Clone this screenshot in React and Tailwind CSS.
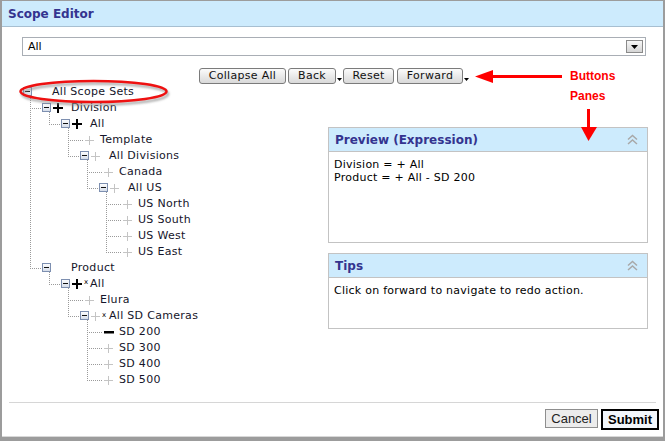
import React from "react";

const rows = [
  { L: 0, t: "All Scope Sets", box: true, icon: null },
  { L: 1, t: "Division", box: true, icon: "pb" },
  { L: 2, t: "All", box: true, icon: "pb" },
  { L: 3, t: "Template", box: false, icon: "pg" },
  { L: 3, t: "All Divisions", box: true, icon: "pg" },
  { L: 4, t: "Canada", box: false, icon: "pg" },
  { L: 4, t: "All US", box: true, icon: "pg" },
  { L: 5, t: "US North", box: false, icon: "pg" },
  { L: 5, t: "US South", box: false, icon: "pg" },
  { L: 5, t: "US West", box: false, icon: "pg" },
  { L: 5, t: "US East", box: false, icon: "pg" },
  { L: 1, t: "Product", box: true, icon: null },
  { L: 2, t: "All", box: true, icon: "pb", x: true },
  { L: 3, t: "Elura", box: false, icon: "pg" },
  { L: 3, t: "All SD Cameras", box: true, icon: "pg", x: true },
  { L: 4, t: "SD 200", box: false, icon: "mb" },
  { L: 4, t: "SD 300", box: false, icon: "pg" },
  { L: 4, t: "SD 400", box: false, icon: "pg" },
  { L: 4, t: "SD 500", box: false, icon: "pg" },
];

function cont(i, k) {
  for (let j = i + 1; j < rows.length; j++) {
    if (rows[j].L <= k) return false;
    if (rows[j].L === k + 1) return true;
  }
  return false;
}

const DOT = { stroke: "#9a9a9a", strokeWidth: 1, strokeDasharray: "1 1", shapeRendering: "crispEdges" };

function Icon({ kind }) {
  if (kind === "pb")
    return (
      <svg width="10" height="10" className="shrink-0">
        <rect x="0" y="4" width="10" height="2" fill="#000" />
        <rect x="4" y="0" width="2" height="10" fill="#000" />
      </svg>
    );
  if (kind === "pg")
    return (
      <svg width="9" height="9" className="shrink-0">
        <rect x="0" y="4" width="9" height="1" fill="#c4c4c4" />
        <rect x="4" y="0" width="1" height="9" fill="#c4c4c4" />
      </svg>
    );
  if (kind === "mb")
    return (
      <svg width="10" height="3" className="shrink-0">
        <rect x="0" y="0" width="10" height="2.5" fill="#000" />
      </svg>
    );
  return <span className="w-[10px]" />;
}

function TreeRow({ row, i }) {
  const { L, box } = row;
  const x0 = 7 + 19 * L;
  const w = box ? x0 + 9 : x0 + 5;
  const lines = [];
  for (let k = 0; k < L - 1; k++) {
    if (cont(i, k)) {
      const x = 14.5 + 19 * k;
      lines.push(<line key={"v" + k} x1={x} y1="0" x2={x} y2="16" {...DOT} />);
    }
  }
  if (L > 0) {
    const x = 14.5 + 19 * (L - 1);
    lines.push(<line key="p" x1={x} y1="0" x2={x} y2={cont(i, L - 1) ? 16 : 9} {...DOT} />);
    lines.push(<line key="h" x1={x + 1} y1="8.5" x2={box ? x0 : x0 + 3} y2="8.5" {...DOT} />);
  }
  if (box) {
    lines.push(
      <g key="b">
        <defs>
          <linearGradient id={"bg" + i} x1="0" y1="0" x2="0" y2="1">
            <stop offset="0" stopColor="#ffffff" />
            <stop offset="1" stopColor="#d3dbe8" />
          </linearGradient>
        </defs>
        <rect x={x0 + 0.5} y="3.5" width="8" height="8" fill={`url(#bg${i})`} stroke="#7d8fb0" shapeRendering="crispEdges" />
        <rect x={x0 + 2} y="7" width="5" height="1" fill="#111" />
        <line x1={x0 + 7.5} y1="12" x2={x0 + 7.5} y2="16" {...DOT} />
      </g>
    );
  }
  return (
    <div className="flex h-4 items-center">
      <svg width={w} height="16" className="shrink-0">
        {lines}
      </svg>
      {box ? (
        <div className="ml-[2px] flex w-[18px] shrink-0 items-center">
          <Icon kind={row.icon} />
          {row.x && <span className="ml-[2px] self-start text-[7px] leading-[7px] text-black">x</span>}
        </div>
      ) : (
        <div className="flex w-[15px] shrink-0 items-center">
          <Icon kind={row.icon} />
        </div>
      )}
      <span className="whitespace-nowrap text-[11px] leading-4 tracking-[0.3px] text-[#15152a]">{row.t}</span>
    </div>
  );
}

function Btn({ w, children }) {
  return (
    <div
      className={`flex h-4 items-center justify-center rounded-[3px] border border-[#7b7b7b] bg-gradient-to-b from-[#fbfbfb] to-[#d9d9d9] text-[11px] tracking-[0.3px] text-[#111] ${w}`}
    >
      {children}
    </div>
  );
}

function SplitArrow() {
  return (
    <svg width="5" height="3" className="ml-px mt-[10px] shrink-0 self-start">
      <polygon points="0,0 5,0 2.5,3" fill="#000" />
    </svg>
  );
}

function Chevrons() {
  return (
    <svg width="11" height="11" className="shrink-0">
      <polyline points="1,5.5 5.5,1.5 10,5.5" fill="none" stroke="#a8a8a8" strokeWidth="1.5" />
      <polyline points="1,10 5.5,6 10,10" fill="none" stroke="#a8a8a8" strokeWidth="1.5" />
    </svg>
  );
}

function Pane({ title, h, children }) {
  return (
    <div className={`flex flex-col border border-[#c3c3c3] bg-white ${h}`}>
      <div className="flex h-[24px] shrink-0 items-center justify-between border-b border-[#c3c3c3] bg-[#cdebfd] pl-[6px] pr-[9px]">
        <span className="text-[12px] font-bold leading-none text-[#34348f]">{title}</span>
        <Chevrons />
      </div>
      <div className="pl-[5px] pt-[6px] text-[11px] leading-[13px] tracking-[0.25px] text-black">{children}</div>
    </div>
  );
}

export default function App() {
  return (
    <div className="relative h-[441px] w-[668px] overflow-hidden bg-white font-['DejaVu_Sans',sans-serif]">
      <div className="flex h-[441px] w-[665px] flex-col border-b-4 border-l-2 border-r-2 border-t border-[#9c9c9c]">
        <div className="flex h-[26px] shrink-0 items-center border-b border-[#a7bfd1] bg-[#cdebfd] pl-[6px]">
          <span className="text-[12px] font-bold leading-none text-[#34348f]">Scope Editor</span>
        </div>

        <div className="ml-[20px] mr-[17px] mt-[10px] flex h-[19px] shrink-0 items-center justify-between border border-[#a9aeb5] bg-white pl-[5px] pr-[2px]">
          <span className="text-[11px] leading-none text-black">All</span>
          <div className="flex h-[13px] w-[17px] items-center justify-center border border-[#8a8a8a] bg-gradient-to-b from-[#f7f7f7] to-[#d5d5d5]">
            <svg width="7" height="4">
              <polygon points="0,0 7,0 3.5,4" fill="#000" />
            </svg>
          </div>
        </div>

        <div className="mt-[12px] flex h-4 shrink-0 items-center pl-[197px]">
          <Btn w="w-[87px]">Collapse All</Btn>
          <div className="ml-[2px]">
            <Btn w="w-[48px]">Back</Btn>
          </div>
          <SplitArrow />
          <div className="ml-px">
            <Btn w="w-[51px]">Reset</Btn>
          </div>
          <div className="ml-[3px]">
            <Btn w="w-[66px]">Forward</Btn>
          </div>
          <SplitArrow />
        </div>

        <div className="flex h-[318px] shrink-0">
          <div className="flex-1 pl-[14px]">
            {rows.map((r, i) => (
              <TreeRow key={i} row={r} i={i} />
            ))}
          </div>
          <div className="mr-[15px] mt-[43px] flex w-[320px] flex-col gap-[10px]">
            <Pane title="Preview (Expression)" h="h-[116px]">
              <div>Division = + All</div>
              <div>Product = + All - SD 200</div>
            </Pane>
            <Pane title="Tips" h="h-[76px]">
              <div>Click on forward to navigate to redo action.</div>
            </Pane>
          </div>
        </div>

        <div className="mx-[7px] h-px shrink-0 bg-[#d6d6d6]" />
        <div className="flex flex-1 flex-col border-b border-[#d8d8d8]">
          <div className="flex justify-end gap-[3px] pr-[4px] pt-[6px] font-['Liberation_Sans',sans-serif]">
            <div className="flex h-[19px] w-[53px] items-center justify-center border border-[#8e8e8e] bg-[#ececec] text-[13px] text-[#222]">
              Cancel
            </div>
            <div className="flex h-[21px] w-[58px] items-center justify-center border-2 border-black bg-[#f2f6fb] text-[13px] font-bold text-black">
              Submit
            </div>
          </div>
        </div>
      </div>

      <svg width="668" height="441" className="pointer-events-none absolute left-0 top-0">
        <defs>
          <filter id="sh" x="-20%" y="-50%" width="140%" height="200%">
            <feGaussianBlur stdDeviation="1.2" />
          </filter>
        </defs>
        <ellipse cx="95" cy="94" rx="73" ry="10.5" fill="none" stroke="#8a8a8a" strokeOpacity="0.7" strokeWidth="2.5" filter="url(#sh)" />
        <ellipse cx="93.5" cy="91.5" rx="73" ry="10.5" fill="none" stroke="#ee1111" strokeWidth="2.5" />
        <rect x="490" y="75" width="72" height="3" fill="#f00" />
        <polygon points="475,76.5 493,70 493,83" fill="#f00" />
        <rect x="587" y="109" width="3" height="19" fill="#f00" />
        <polygon points="581,127 597,127 588.5,141" fill="#f00" />
      </svg>
      <span className="absolute left-[570px] top-[69px] font-['Liberation_Sans',sans-serif] text-[12px] font-bold leading-[14px] text-[#f00]">
        Buttons
      </span>
      <span className="absolute left-[570px] top-[89px] font-['Liberation_Sans',sans-serif] text-[12px] font-bold leading-[14px] text-[#f00]">
        Panes
      </span>
    </div>
  );
}
